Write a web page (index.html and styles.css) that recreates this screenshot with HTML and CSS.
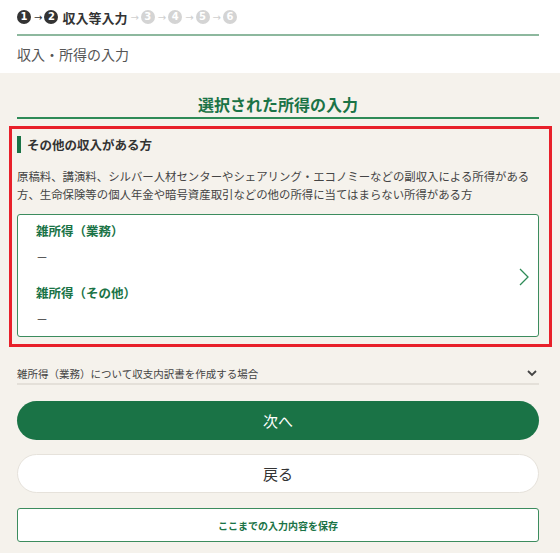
FILE: index.html
```html
<!DOCTYPE html>
<html lang="ja">
<head>
<meta charset="UTF-8">
<title>収入・所得の入力</title>
<link rel="stylesheet" href="styles.css">
</head>
<body>
<div class="header">
  <div class="steps">
    <span class="num done">1</span><span class="arrow">→</span>
    <span class="num done">2</span><span class="step-name">収入等入力</span><span class="arrow off">→</span>
    <span class="num off">3</span><span class="arrow off">→</span>
    <span class="num off">4</span><span class="arrow off">→</span>
    <span class="num off">5</span><span class="arrow off">→</span>
    <span class="num off">6</span>
  </div>
  <div class="page-name">収入・所得の入力</div>
</div>
<div class="main">
  <h2 class="title">選択された所得の入力</h2>
  <div class="highlight">
    <h3 class="section-head">その他の収入がある方</h3>
    <p class="desc">原稿料、講演料、シルバー人材センターやシェアリング・エコノミーなどの副収入による所得がある方、生命保険等の個人年金や暗号資産取引などの他の所得に当てはまらない所得がある方</p>
    <div class="card">
      <div class="card-body">
        <div class="item-label">雑所得（業務）</div>
        <div class="item-value">－</div>
        <div class="item-label">雑所得（その他）</div>
        <div class="item-value">－</div>
      </div>
      <svg class="chev" width="10" height="18" viewBox="0 0 10 18"><polyline points="1,1 9,9 1,17" fill="none" stroke="#2e8b57" stroke-width="1.3"/></svg>
    </div>
  </div>
  <div class="accordion">
    <span>雑所得（業務）について収支内訳書を作成する場合</span>
    <svg width="10" height="7" viewBox="0 0 10 7"><polyline points="1,1 5,5 9,1" fill="none" stroke="#444" stroke-width="1.8"/></svg>
  </div>
  <div class="btn btn-next">次へ</div>
  <div class="btn btn-back">戻る</div>
  <div class="btn-save">ここまでの入力内容を保存</div>
</div>
</body>
</html>
```
FILE: styles.css
```css
body { margin: 0; background: #f5f2ec; font-family: "Noto Sans CJK JP", "Noto Sans", sans-serif; color: #333; }
.header { background: #fff; height: 73px; padding: 0 21px 0 17px; }
.steps { display: flex; align-items: center; height: 34px; border-bottom: 2px solid #8db89e; font-size: 13px; font-weight: bold; }
.num { display: inline-flex; width: 14px; height: 14px; border-radius: 50%; align-items: center; justify-content: center; color: #fff; font-size: 10px; line-height: 1; font-family: "DejaVu Sans", sans-serif; }
.num.done { background: #333; }
.num.off { background: #d4d4d4; }
.arrow { font-size: 10px; margin: 0 2px 0 3px; color: #333; font-weight: normal; font-family: "DejaVu Sans", sans-serif; }
.arrow.off { color: #cfcfcf; }
.step-name { margin-left: 4px; color: #333; }
.page-name { font-size: 14px; color: #555; line-height: 36px; }

.main { padding: 0 21px 11px 17px; }
.title { margin: 0; padding-top: 18px; height: 26px; line-height: 26px; text-align: center; font-size: 16px; color: #1a7346; border-bottom: 2px solid #2e8b57; }
.highlight { margin: 7px -13px 0 -8px; border: 3px solid #e8202a; padding: 7px 10px 7px 5px; }
.section-head { margin: 0; font-size: 12.5px; color: #333; border-left: 4px solid #1a7346; padding-left: 6px; height: 17px; line-height: 17px; }
.desc { margin: 14px 0 0; font-size: 11.4px; line-height: 18px; color: #444; }
.card { margin-top: 11px; background: #fff; border: 1px solid #3c8c5e; border-radius: 3px; display: flex; align-items: center; padding: 7px 9px 8px 18px; }
.card-body { flex: 1; }
.item-label { font-size: 12.5px; font-weight: bold; color: #1a7346; line-height: 18px; }
.item-value { font-size: 12px; color: #333; line-height: 18px; margin: 8px 0 18px 0; }
.item-value:last-child { margin-bottom: 0; }
.chev { margin-top: 4px; }

.accordion { margin-top: 16px; display: flex; justify-content: space-between; align-items: center; font-size: 10.5px; color: #444; height: 20px; border-bottom: 2px solid #e4e0d9; padding-right: 2px; }
.btn { height: 39px; border-radius: 20px; display: flex; align-items: center; justify-content: center; font-size: 15px; box-sizing: border-box; }
.btn-next { margin-top: 16px; background: #1a7346; color: #fff; }
.btn-back { margin-top: 14px; background: #fff; border: 1px solid #e6e2db; color: #333; }
.btn-save { margin-top: 15px; height: 34px; box-sizing: border-box; background: #fff; border: 1px solid #3c8c5e; border-radius: 3px; display: flex; align-items: center; justify-content: center; font-size: 10px; font-weight: bold; color: #1a7346; }
```
